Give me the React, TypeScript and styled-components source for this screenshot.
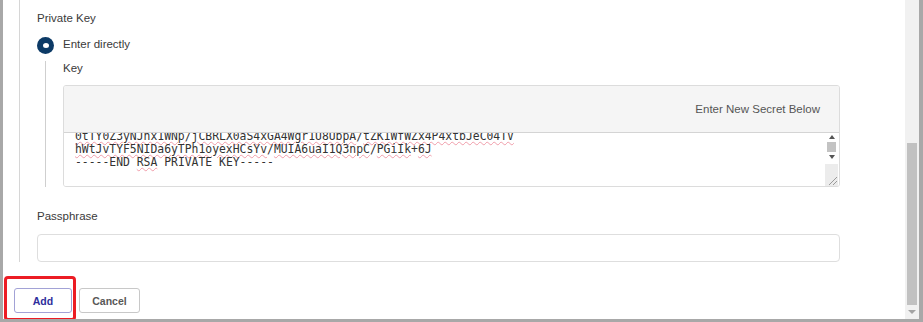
import React, { useLayoutEffect, useRef } from "react";
import styled, { createGlobalStyle } from "styled-components";

const Global = createGlobalStyle`
  html, body { margin: 0; padding: 0; background: #ffffff; }
  body { font-family: "Liberation Sans", Arial, sans-serif; }
  * { box-sizing: border-box; }
`;

const Frame = styled.div`
  width: 923px;
  height: 322px;
  display: flex;
  overflow: hidden;
  border-left: 3px solid #a8a8a8;
  border-right: 4px solid #a8a8a8;
  border-bottom: 3px solid #a8a8a8;
  background: #ffffff;
`;

const Main = styled.div`
  flex: 1;
  display: flex;
  flex-direction: column;
  padding-right: 65px;
  min-width: 0;
`;

const Panel = styled.div`
  margin-left: 16px;
  border-left: 1px solid #d6d6d6;
  padding: 10px 0 0 17px;
  display: flex;
  flex-direction: column;
`;

const Label = styled.div<{ $lh?: number }>`
  font-size: 11.5px;
  line-height: ${(p) => p.$lh ?? 16}px;
  color: #3a3a3a;
`;

const RadioRow = styled.div`
  margin-top: 10px;
  display: flex;
  align-items: flex-start;
  gap: 9px;
`;

const RadioDot = styled.span`
  width: 17px;
  height: 17px;
  margin-top: 1px;
  border-radius: 50%;
  background: #0c3a66;
  display: flex;
  align-items: center;
  justify-content: center;
  flex-shrink: 0;
  &::after {
    content: "";
    width: 6px;
    height: 5px;
    border-radius: 50%;
    background: #ffffff;
  }
`;

const Nested = styled.div`
  margin-top: 7px;
  margin-left: 8px;
  border-left: 1px solid #cfcfcf;
  padding-left: 17px;
  display: flex;
  flex-direction: column;
`;

const SecretBox = styled.div`
  margin-top: 10px;
  border: 1px solid #dcdcdc;
  border-radius: 3px;
  overflow: hidden;
  display: flex;
  flex-direction: column;
`;

const SecretHeader = styled.div`
  height: 47px;
  background: #f5f5f5;
  border-bottom: 1px solid #d4d4d4;
  display: flex;
  align-items: center;
  justify-content: flex-end;
  padding-right: 19px;
  font-size: 11.5px;
  color: #555555;
`;

const KeyArea = styled.div`
  height: 53px;
  display: flex;
  background: #ffffff;
`;

const KeyText = styled.div`
  flex: 1;
  overflow: hidden;
  white-space: pre;
  font-family: "DejaVu Sans Mono", "Liberation Mono", monospace;
  font-size: 11.4px;
  line-height: 13px;
  color: #333333;
  padding: 0 8px 17px 11px;
`;

const VScroll = styled.div`
  width: 13px;
  margin-right: 1px;
  display: flex;
  flex-direction: column;
  align-items: center;
  background: #ffffff;
`;

const Arrow = styled.div<{ $down?: boolean }>`
  width: 13px;
  height: 8px;
  display: flex;
  align-items: center;
  justify-content: center;
  &::after {
    content: "";
    width: 0;
    height: 0;
    border-left: 3.5px solid transparent;
    border-right: 3.5px solid transparent;
    ${(p) => (p.$down ? "border-top: 4px solid #555;" : "border-bottom: 4px solid #555;")}
  }
`;

const VThumb = styled.div`
  width: 9px;
  height: 10px;
  margin: 1px 0;
  background: #c3c3c3;
`;

const Resizer = styled.div`
  flex: 1;
  width: 13px;
  margin-top: 3px;
  background: #ececec;
  display: flex;
  align-items: flex-end;
  justify-content: flex-end;
`;

const Typo = styled.span`
  text-decoration: underline wavy rgba(232, 100, 120, 0.6);
  text-decoration-thickness: 1px;
  text-underline-offset: 1px;
`;

const Field = styled.div`
  margin-top: 21px;
  display: flex;
  flex-direction: column;
  gap: 10px;
`;

const Input = styled.input`
  height: 28px;
  width: 100%;
  border: 1px solid #dedede;
  border-radius: 4px;
  background: #ffffff;
  outline: none;
  padding: 0 8px;
`;

const Buttons = styled.div`
  margin-top: 26px;
  padding-left: 11px;
  display: flex;
  gap: 7px;
`;

const Highlight = styled.div`
  position: relative;
  display: flex;
  &::before {
    content: "";
    position: absolute;
    left: -10px;
    right: -4px;
    top: -12px;
    bottom: -8px;
    border: 3px solid #ec1c24;
    border-radius: 4px;
    pointer-events: none;
  }
`;

const Button = styled.button<{ $primary?: boolean; $w: number }>`
  width: ${(p) => p.$w}px;
  height: 25px;
  background: #ffffff;
  border: 1px solid ${(p) => (p.$primary ? "#a2a2d6" : "#c8c8c8")};
  border-radius: 3px;
  font-family: "Liberation Sans", Arial, sans-serif;
  font-weight: bold;
  font-size: 10.5px;
  color: ${(p) => (p.$primary ? "#2e2e9c" : "#585858")};
  padding: 0;
  cursor: pointer;
`;

const ScrollTrack = styled.div`
  width: 14px;
  background: #f1f1f1;
  display: flex;
  flex-direction: column;
  align-items: center;
  padding: 143px 0 0;
`;

const ScrollThumb = styled.div`
  width: 10px;
  height: 162px;
  background: #c1c1c1;
`;

const ScrollArrow = styled.div`
  margin-top: 5px;
  width: 0;
  height: 0;
  border-left: 4px solid transparent;
  border-right: 4px solid transparent;
  border-top: 4px solid #a3a3a3;
`;

const pre = [
  "-----BEGIN RSA PRIVATE KEY-----",
  "MIIEowIBAAKCAQEAu3kY8pQzVb7Lr2XwQ9Fj0hN5cTzA1mK4sD8eR6gP2vWnYx3H",
  "9tLqZr0c2Jm5QyP7wXe1Fb8KsN4uV6dA3hGiT0oR5lE2yCkMnB7zW9pX1fUaQvS",
];

function Line({ parts }: { parts: [string, boolean][] }) {
  return (
    <>
      {parts.map(([t, typo], i) => (typo ? <Typo key={i}>{t}</Typo> : <React.Fragment key={i}>{t}</React.Fragment>))}
      {"\n"}
    </>
  );
}

export default function App() {
  const ref = useRef<HTMLDivElement>(null);
  useLayoutEffect(() => {
    if (ref.current) ref.current.scrollTop = ref.current.scrollHeight;
  }, []);
  return (
    <>
      <Global />
      <Frame>
        <Main>
          <Panel>
            <Label>Private Key</Label>
            <RadioRow>
              <RadioDot />
              <Label>Enter directly</Label>
            </RadioRow>
            <Nested>
              <Label $lh={14}>Key</Label>
              <SecretBox>
                <SecretHeader>Enter New Secret Below</SecretHeader>
                <KeyArea>
                  <KeyText ref={ref} role="textbox" aria-multiline="true">
                    {pre.map((l, i) => (
                      <Line key={i} parts={[[l, i > 0]]} />
                    ))}
                    <Line
                      parts={[
                        ["0tTY0Z3yNJhx1WNp", true],
                        ["/", false],
                        ["jCBRLX0aS4xGA4Wgr1U8UbpA", true],
                        ["/", false],
                        ["tZK1WfWZx4P4xtbJeC04TV", true],
                      ]}
                    />
                    <Line
                      parts={[
                        ["hWtJvTYF5NIDa6yTPh1oyexHCsYv", true],
                        ["/", false],
                        ["MUIA6uaI1Q3npC", true],
                        ["/", false],
                        ["PGiIk", true],
                        ["+", false],
                        ["6J", true],
                      ]}
                    />
                    {"-----END "}
                    <Typo>RSA</Typo>
                    {" PRIVATE KEY-----"}
                  </KeyText>
                  <VScroll>
                    <Arrow />
                    <VThumb />
                    <Arrow $down />
                    <Resizer>
                      <svg width="13" height="13" viewBox="0 0 13 13">
                        <path d="M4 12 L12 4 M8 12 L12 8" stroke="#9a9a9a" strokeWidth="1" fill="none" />
                      </svg>
                    </Resizer>
                  </VScroll>
                </KeyArea>
              </SecretBox>
            </Nested>
            <Field>
              <Label>Passphrase</Label>
              <Input type="password" />
            </Field>
          </Panel>
          <Buttons>
            <Highlight>
              <Button $primary $w={58}>Add</Button>
            </Highlight>
            <Button $w={61}>Cancel</Button>
          </Buttons>
        </Main>
        <ScrollTrack>
          <ScrollThumb />
          <ScrollArrow />
        </ScrollTrack>
      </Frame>
    </>
  );
}
